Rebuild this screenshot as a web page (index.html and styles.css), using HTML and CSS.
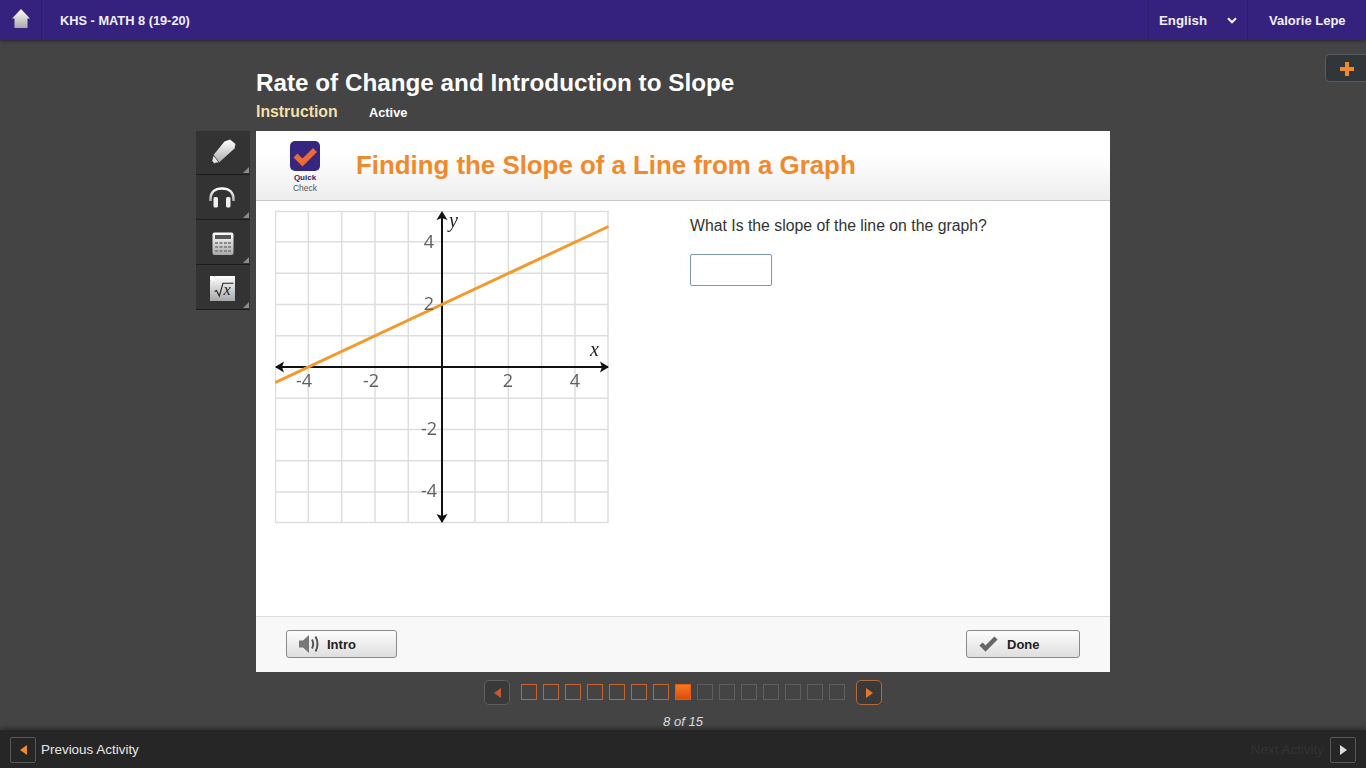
FILE: index.html
```html
<!DOCTYPE html>
<html lang="en">
<head>
<meta charset="utf-8">
<title>Finding the Slope of a Line from a Graph</title>
<link rel="stylesheet" href="styles.css">
</head>
<body>
<header class="topbar">
  <a class="home"><svg width="18" height="20" viewBox="0 0 18 20"><defs><linearGradient id="hg" x1="0" y1="0" x2="0" y2="1"><stop offset="0" stop-color="#fff"/><stop offset="1" stop-color="#a9a9a9"/></linearGradient></defs><path d="M9 0 18 9.500H15.500V19H2.500V9.500H0Z" fill="url(#hg)"/></svg></a>
  <div class="course">KHS - MATH 8 (19-20)</div>
  <div class="lang"><span>English</span><svg width="10" height="7" viewBox="0 0 10 7"><path d="M1 1.200 5 5.200 9 1.200" fill="none" stroke="#f2eff9" stroke-width="2.200"/></svg></div>
  <div class="user">Valorie Lepe</div>
</header>

<main class="stage">
  <div class="tab-plus"><svg width="14" height="14" viewBox="0 0 14 14"><path d="M5 0H9V5H14V9H9V14H5V9H0V5H5Z" fill="#f08a2c"/></svg></div>
  <div class="heading">
    <h1>Rate of Change and Introduction to Slope</h1>
    <div class="sub"><span class="kind">Instruction</span><span class="state">Active</span></div>
  </div>
  <aside class="tools">
    <div class="tool"><svg width="26" height="30" viewBox="0 0 26 30"><defs><linearGradient id="tg" x1="0" y1="0" x2="0" y2="1"><stop offset="0" stop-color="#fff"/><stop offset="1" stop-color="#a8a8a8"/></linearGradient></defs><path d="M1 26 3.500 17 14.500 3.500 20 1.500 25.500 6 24.500 10.500 9 24.500Z" fill="url(#tg)"/><path d="M1 26 3.500 17 9 24.500Z" fill="#e8e8e8" stroke="#222" stroke-width=".7"/><path d="M1 26 2 22.800 3.900 25Z" fill="#111"/></svg></div>
    <div class="tool"><svg width="28" height="24" viewBox="0 0 28 24"><path d="M1.500 16V14C1.500 7 6 3.500 13 3.500S24.500 7 24.500 14V16" fill="none" stroke="url(#tg)" stroke-width="2.600"/><rect x="4.500" y="12" width="4.500" height="10.500" rx="1.500" fill="#f0f0f0"/><rect x="17" y="12" width="4.500" height="10.500" rx="1.500" fill="#f0f0f0"/></svg></div>
    <div class="tool"><svg width="22" height="26" viewBox="0 -3 22 26"><rect x="0.500" y="0.500" width="21" height="22.500" rx="2" fill="url(#tg)"/><rect x="3" y="3" width="16" height="4" fill="#555"/><path d="M3 10h3v2H3zM7.500 10h3v2h-3zM12 10h3v2h-3zM16 10h3v2h-3zM3 14h3v2H3zM7.500 14h3v2h-3zM12 14h3v2h-3zM16 14h3v2h-3zM3 18h3v2H3zM7.500 18h3v2h-3zM12 18h3v2h-3zM16 18h3v2h-3z" fill="#888"/></svg></div>
    <div class="tool"><svg width="26" height="28" viewBox="0 -3 26 28"><path d="M5 0H25V25H0V5Z" fill="url(#tg)"/><path d="M0 0H4.500V4.500H0Z" fill="#fff"/><path d="M4.500 15.500 6.500 14.500 9.300 20 13 7.300H23.500" fill="none" stroke="#222" stroke-width="1.100"/><text class="math-x" x="13.500" y="19">x</text></svg></div>
  </aside>
  <section class="column">
    <article class="card">
      <div class="card-head">
        <div class="badge">
          <svg width="30" height="30" viewBox="0 0 30 30"><rect width="30" height="30" rx="5" fill="#35277f"/><path d="M5.500 14.500 12.500 21.500 25 9" fill="none" stroke="#ef6a2e" stroke-width="5.500"/></svg>
          <span class="badge-a">Quick</span><span class="badge-b">Check</span>
        </div>
        <h2>Finding the Slope of a Line from a Graph</h2>
      </div>
      <div class="card-body">
        <svg class="graph" width="336" height="319" viewBox="0 -5 336 319">
          <g class="grid">
            <path d="M0.500 0V312M33.300 0V312M66.700 0V312M100 0V312M133.300 0V312M200 0V312M233.300 0V312M266.700 0V312M300 0V312M333 0V312"/>
            <path d="M0 0.500H333.500M0 30.800H333.500M0 62.300H333.500M0 93.400H333.500M0 124.700H333.500M0 187.300H333.500M0 218.400H333.500M0 249.700H333.500M0 281H333.500M0 311.500H333.500"/>
          </g>
          <path class="axis" d="M1 156H333M167 2V311"/>
          <path class="arrow" d="M0 156 9 150.500 7 156 9 161.500ZM334 156 325 150.500 327 156 325 161.500ZM167 0 161.500 9 167 7 172.500 9ZM167 312 161.500 303 167 305 172.500 303Z"/>
          <path class="line" d="M0 171.700 333.500 15.500"/>
          <text class="num" x="154" y="37" text-anchor="middle">4</text>
          <text class="num" x="154" y="99" text-anchor="middle">2</text>
          <text class="num" x="29" y="176" text-anchor="middle">-4</text>
          <text class="num" x="96" y="176" text-anchor="middle">-2</text>
          <text class="num" x="233" y="176" text-anchor="middle">2</text>
          <text class="num" x="300" y="176" text-anchor="middle">4</text>
          <text class="num" x="154" y="224" text-anchor="middle">-2</text>
          <text class="num" x="154" y="286" text-anchor="middle">-4</text>
          <text class="var" x="174" y="16">y</text>
          <text class="var" x="315" y="145">x</text>
        </svg>
        <div class="question">
          <p>What Is the slope of the line on the graph?</p>
          <input class="answer" type="text" aria-label="Answer">
        </div>
      </div>
      <div class="card-foot">
        <button class="btn btn-intro" type="button"><svg width="22" height="20" viewBox="0 0 22 20"><path d="M1 6.500H5L11 1V19L5 13.500H1Z" fill="#777"/><path d="M14 5.500Q16.500 10 14 14.500M17.500 2.500Q21.500 10 17.500 17.500" fill="none" stroke="#555" stroke-width="2"/></svg>Intro</button>
        <button class="btn btn-done" type="button"><svg width="20" height="16" viewBox="0 0 20 16"><path d="M2 8 6.500 12.500 17 2" fill="none" stroke="#666" stroke-width="4.500"/></svg>Done</button>
      </div>
    </article>
    <nav class="pager">
      <button class="pg-btn" type="button"><svg width="7" height="10" viewBox="0 0 7 10"><path d="M7 0V10L0 5Z" fill="#c95a30"/></svg></button>
      <div class="squares">
        <i class="sq done"></i><i class="sq done"></i><i class="sq done"></i><i class="sq done"></i><i class="sq done"></i><i class="sq done"></i><i class="sq done"></i><i class="sq now"></i><i class="sq"></i><i class="sq"></i><i class="sq"></i><i class="sq"></i><i class="sq"></i><i class="sq"></i><i class="sq"></i>
      </div>
      <button class="pg-btn pg-next" type="button"><svg width="7" height="10" viewBox="0 0 7 10"><path d="M0 0V10L7 5Z" fill="#e8762c"/></svg></button>
    </nav>
    <div class="count">8 of 15</div>
  </section>
</main>

<footer class="bottombar">
  <button class="act-btn" type="button"><svg width="7" height="10" viewBox="0 0 7 10"><path d="M7 0V10L0 5Z" fill="#f08a2c"/></svg></button>
  <span class="act-prev">Previous Activity</span>
  <span class="act-next">Next Activity</span>
  <button class="act-btn" type="button"><svg width="7" height="10" viewBox="0 0 7 10"><path d="M0 0V10L7 5Z" fill="#ddd"/></svg></button>
</footer>
</body>
</html>
```

FILE: styles.css
```css
* { box-sizing: border-box; }
html, body { margin: 0; height: 100%; }
body {
  display: flex;
  flex-direction: column;
  height: 768px;
  overflow: hidden;
  background: #444;
  font-family: "Liberation Sans", Arial, sans-serif;
}
.topbar {
  flex: none;
  height: 40px;
  display: flex;
  align-items: center;
  background: #35227f;
  color: #f2eff9;
  font-size: 12.800px;
  font-weight: 700;
  box-shadow: 0 1px 3px rgba(0,0,0,.45);
}
.home {
  width: 42px;
  height: 40px;
  padding: 9px 0 0 12px;
  border-right: 1px solid #2d1c70;
}
.course { flex: 1; padding-left: 18px; }
.lang {
  width: 100px;
  height: 40px;
  display: flex;
  align-items: center;
  justify-content: space-between;
  padding: 0 10px;
  border-left: 1px solid #2d1c70;
  border-right: 1px solid #2d1c70;
  font-size: 13.300px;
}
.user { width: 118px; padding-left: 21px; font-size: 13px; }
.stage {
  flex: 1;
  position: relative;
  display: grid;
  grid-template-columns: 54px 854px;
  grid-template-rows: 91px 1fr;
  column-gap: 6px;
  padding-left: 196px;
}
.tab-plus {
  position: absolute;
  right: 0;
  top: 14px;
  width: 41px;
  height: 28px;
  padding: 7px 0 0 14px;
  background: #31363b;
  border: 1px solid #5a5a5a;
  border-right: 0;
  border-radius: 5px 0 0 5px;
}
.heading { grid-column: 2; grid-row: 1; padding-top: 28px; }
h1 { margin: 0; font-size: 24.250px; line-height: 30px; color: #fff; }
.sub { display: flex; align-items: baseline; margin-top: 3px; line-height: 22px; }
.kind { width: 113px; font-size: 15.800px; font-weight: 700; color: #f6dfa8; }
.state { font-size: 12.800px; font-weight: 700; color: #fff; }
.tools { grid-column: 1; grid-row: 2; display: flex; flex-direction: column; }
.tool {
  position: relative;
  height: 45px;
  display: flex;
  align-items: center;
  justify-content: center;
  background: #333;
  border-bottom: 1px solid #1c1c1c;
}
.tool:first-child { height: 44px; }
.tool::after {
  content: "";
  position: absolute;
  right: 1px;
  bottom: 1px;
  border-style: solid;
  border-width: 0 0 6px 6px;
  border-color: transparent transparent #8b8b8b transparent;
}
.math-x { font: italic 16px "Liberation Serif", serif; fill: #222; }
.column { grid-column: 2; grid-row: 2; }
.card { height: 541px; display: flex; flex-direction: column; background: #fff; }
.card-head {
  height: 70px;
  flex: none;
  display: flex;
  align-items: center;
  background: linear-gradient(#fff 35%, #ededed);
  border-bottom: 1px solid #c9c9c9;
}
.badge {
  width: 98px;
  height: 70px;
  margin-right: 2px;
  padding-top: 10px;
  display: flex;
  flex-direction: column;
  align-items: center;
  line-height: 10px;
}
.badge svg { margin-bottom: 2px; }
.badge-a { font-size: 8px; font-weight: 700; color: #2a2468; }
.badge-b { font-size: 8.500px; color: #555; }
h2 { margin: 0; font-size: 25.850px; color: #f08a2c; }
.card-body { flex: 1; display: flex; padding: 5px 0 0 19px; }
.graph { flex: none; display: block; filter: blur(.35px); }
.grid path { fill: none; stroke: #dedede; stroke-width: 1.500; }
.axis { fill: none; stroke: #111; stroke-width: 2; }
.arrow { fill: #111; }
.line { fill: none; stroke: #f39a2e; stroke-width: 3; }
.num { font: 18px "Open Sans", sans-serif; fill: #5f6068; }
.var { font: italic 400 20px "Liberation Serif", serif; fill: #222; }
.question { margin-left: 79px; padding-top: 10px; }
.question p { margin: 0 0 18px; font-size: 15.800px; line-height: 20px; color: #333; }
.answer {
  display: block;
  width: 82px;
  height: 32px;
  background: #fff;
  border: 1px solid #7f95ad;
  border-radius: 2px;
}
.card-foot {
  height: 56px;
  flex: none;
  display: flex;
  justify-content: space-between;
  padding: 13px 30px 0;
  background: #f8f8f8;
  border-top: 1px solid #ddd;
}
.btn {
  height: 28px;
  display: flex;
  align-items: center;
  background: linear-gradient(#fdfdfd, #dedede);
  border: 1px solid #8a8a8a;
  border-radius: 3px;
  font: 700 13px "Liberation Sans", Arial, sans-serif;
  color: #222;
  padding: 0 0 0 11px;
}
.btn-intro { width: 111px; gap: 7px; }
.btn-done { width: 114px; padding-left: 12px; gap: 8px; }
.pager {
  height: 25px;
  margin-top: 8px;
  display: flex;
  align-items: flex-start;
  justify-content: center;
}
.pg-btn {
  width: 26px;
  height: 25px;
  padding: 0;
  display: flex;
  align-items: center;
  justify-content: center;
  background: #3a3a3a;
  border: 1px solid #5f5f5f;
  border-radius: 5px;
}
.pg-next { border-color: #b8683a; }
.squares { display: flex; gap: 6px; margin: 4px 11px 0; }
.sq { width: 16px; height: 16px; border: 1px solid #5f5f5f; }
.sq.done { border-color: #c8622c; }
.sq.now { border-color: #e85a12; background: linear-gradient(#f27a22, #e04a08); }
.count {
  margin-top: 9px;
  text-align: center;
  font-size: 13px;
  line-height: 16px;
  font-style: italic;
  color: #ddd;
}
.bottombar {
  flex: none;
  height: 41px;
  display: flex;
  align-items: center;
  padding: 0 10px 2px;
  background: #262626;
  box-shadow: 0 -2px 5px rgba(0,0,0,.35);
  font-size: 13.450px;
}
.act-btn {
  width: 26px;
  height: 26px;
  padding: 0;
  display: flex;
  align-items: center;
  justify-content: center;
  background: #262626;
  border: 1px solid #585858;
  border-radius: 2px;
}
.act-prev { flex: 1; margin-left: 5px; color: #e6e6e6; }
.act-next { margin-right: 6px; color: #333; }
```
